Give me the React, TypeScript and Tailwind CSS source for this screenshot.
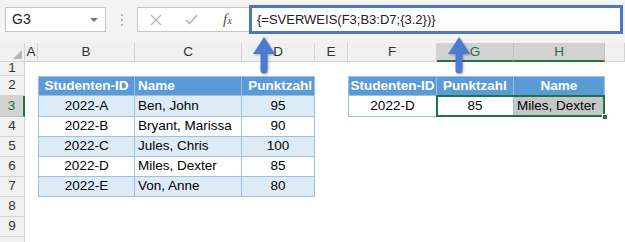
import React from 'react';

type Kind = 'hdr' | 'band' | 'plain' | 'sel';
type Align = 'left' | 'center' | 'right';

interface TableCell {
  t: string;
  kind: Kind;
  align: Align;
  first?: boolean;
  top?: boolean;
}

const COLS = ['A', 'B', 'C', 'D', 'E', 'F', 'G', 'H', ''];
const ROWS = [1, 2, 3, 4, 5, 6, 7, 8, 9, 10];

const students = [
  ['2022-A', 'Ben, John', '95'],
  ['2022-B', 'Bryant, Marissa', '90'],
  ['2022-C', 'Jules, Chris', '100'],
  ['2022-D', 'Miles, Dexter', '85'],
  ['2022-E', 'Von, Anne', '80'],
];

const cells: Record<string, TableCell> = {
  B2: { t: 'Studenten-ID', kind: 'hdr', align: 'center', first: true, top: true },
  C2: { t: 'Name', kind: 'hdr', align: 'left', top: true },
  D2: { t: 'Punktzahl', kind: 'hdr', align: 'right', top: true },
  F2: { t: 'Studenten-ID', kind: 'hdr', align: 'center', first: true, top: true },
  G2: { t: 'Punktzahl', kind: 'hdr', align: 'center', top: true },
  H2: { t: 'Name', kind: 'hdr', align: 'center', top: true },
  F3: { t: '2022-D', kind: 'plain', align: 'center', first: true },
  G3: { t: '85', kind: 'plain', align: 'center' },
  H3: { t: 'Miles, Dexter', kind: 'sel', align: 'left' },
};

students.forEach((s, i) => {
  const row = i + 3;
  const kind: Kind = i % 2 === 0 ? 'band' : 'plain';
  cells[`B${row}`] = { t: s[0], kind, align: 'center', first: true };
  cells[`C${row}`] = { t: s[1], kind, align: 'left' };
  cells[`D${row}`] = { t: s[2], kind, align: 'center' };
});

const kindClass: Record<Kind, string> = {
  hdr: 'bg-[#5b9bd5] text-white font-bold',
  band: 'bg-[#ddebf7] text-black',
  plain: 'bg-white text-black',
  sel: 'bg-[#c6c6c6] text-black',
};

const alignClass: Record<Align, string> = {
  left: 'justify-start pl-[3px]',
  center: 'justify-center',
  right: 'justify-end pr-[2px]',
};

const Toolbar: React.FC = () => (
  <div className="flex h-[43px] items-start bg-[#f3f3f3] pl-[5px] pt-[7px]">
    <div className="flex h-[25px] w-[101px] items-center border border-[#c6c6c6] bg-white pl-[6px] text-[14px] text-[#222]">
      G3
      <span className="ml-auto mr-[7px] h-0 w-0 border-x-[4px] border-t-[4px] border-x-transparent border-t-[#777]" />
    </div>
    <div className="ml-[15px] mt-[7px] flex flex-col gap-[3px]">
      <span className="h-[2px] w-[2px] bg-[#b5b5b5]" />
      <span className="h-[2px] w-[2px] bg-[#b5b5b5]" />
      <span className="h-[2px] w-[2px] bg-[#b5b5b5]" />
    </div>
    <div className="ml-[14px] flex h-[25px] w-[112px] items-center border border-r-0 border-[#c6c6c6] bg-white pl-[12px]">
      <svg width="12" height="12" viewBox="0 0 12 12">
        <path d="M1 1L11 11M11 1L1 11" stroke="#b4b4b4" strokeWidth="1.3" fill="none" />
      </svg>
      <svg className="ml-[23px]" width="13" height="11" viewBox="0 0 13 11">
        <path d="M1 6L4.5 9.5L12 1" stroke="#b4b4b4" strokeWidth="1.6" fill="none" />
      </svg>
      <span className="ml-[25px] font-['Liberation_Serif',serif] text-[15px] italic leading-none text-[#555]">
        f<span className="text-[11px]">x</span>
      </span>
    </div>
    <div className="-mt-[2px] flex h-[29px] w-[374px] items-center border-[3px] border-[#4a78c8] bg-white pl-[5px] text-[13px] text-[#222]">
      {'{=SVERWEIS(F3;B3:D7;{3.2})}'}
    </div>
  </div>
);

const Sheet: React.FC = () => (
  <div className="grid grid-cols-[25px_13px_97px_107px_73px_33px_89px_77px_91px_20px] grid-rows-[19px_14px_20px_21px_20px_20px_20px_20px_20px_20px_20px]">
    <div className="relative border-b border-r border-[#d4d4d4] bg-[#f0f0f0]">
      <span className="absolute bottom-[2px] right-[2px] h-0 w-0 border-b-[9px] border-l-[9px] border-b-[#b4b4b4] border-l-transparent" />
    </div>
    {COLS.map((c, i) => {
      const hi = c === 'G' || c === 'H';
      return (
        <div
          key={`h${i}`}
          className={
            hi
              ? 'flex items-center justify-center border-b-2 border-r border-b-[#217346] border-r-[#c0c0c0] bg-[#d2d2d2] pt-[1px] text-[13.5px] text-[#217346]'
              : 'flex items-center justify-center border-b border-r border-[#d4d4d4] bg-[#f0f0f0] text-[13.5px] text-[#333]'
          }
        >
          {c}
        </div>
      );
    })}
    {ROWS.map((r) => (
      <React.Fragment key={r}>
        <div
          className={
            r === 3
              ? 'flex items-center justify-center border-b border-r-2 border-b-[#c0c0c0] border-r-[#217346] bg-[#d2d2d2] text-[13.5px] text-[#217346]'
              : 'flex items-center justify-center border-b border-r border-[#d4d4d4] bg-[#f0f0f0] text-[13.5px] text-[#333]'
          }
        >
          {r < 10 ? r : ''}
        </div>
        {COLS.map((c, i) => {
          const cell = c ? cells[`${c}${r}`] : undefined;
          if (!cell) return <div key={`${c}${r}${i}`} className="bg-white" />;
          return (
            <div
              key={`${c}${r}`}
              className={`flex items-center whitespace-nowrap border-b border-r border-[#9bc2e6] text-[13.5px] ${kindClass[cell.kind]} ${alignClass[cell.align]} ${cell.first ? 'border-l' : ''} ${cell.top ? 'border-t' : ''}`}
            >
              {cell.t}
            </div>
          );
        })}
      </React.Fragment>
    ))}
  </div>
);

const Arrow: React.FC<{ className: string }> = ({ className }) => (
  <svg className={`absolute top-[36px] drop-shadow-[1px_1px_1px_rgba(0,0,0,0.3)] ${className}`} width="24" height="38" viewBox="0 0 24 38">
    <path d="M12 1L23 18H15.5V34A3.5 3.5 0 0 1 8.5 34V18H1Z" fill="#4a7dd0" />
  </svg>
);

export default function App() {
  return (
    <div className="relative h-[242px] w-[625px] overflow-hidden bg-white font-['Liberation_Sans',Arial,sans-serif]">
      <Toolbar />
      <Sheet />
      <div className="absolute left-[436px] top-[95px] h-[22px] w-[169px] border-2 border-[#217346]" />
      <div className="absolute left-[602px] top-[114px] h-[6px] w-[6px] border border-white bg-[#217346]" />
      <Arrow className="left-[252px]" />
      <Arrow className="left-[447px]" />
    </div>
  );
}
